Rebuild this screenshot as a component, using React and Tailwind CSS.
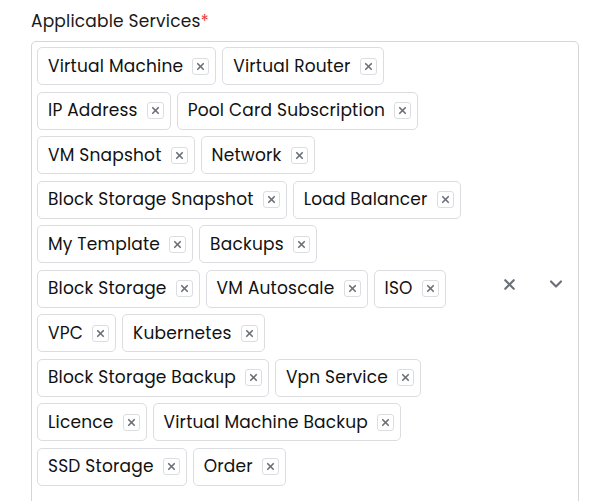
import { X, ChevronDown } from "lucide-react";

const services = [
  "Virtual Machine",
  "Virtual Router",
  "IP Address",
  "Pool Card Subscription",
  "VM Snapshot",
  "Network",
  "Block Storage Snapshot",
  "Load Balancer",
  "My Template",
  "Backups",
  "Block Storage",
  "VM Autoscale",
  "ISO",
  "VPC",
  "Kubernetes",
  "Block Storage Backup",
  "Vpn Service",
  "Licence",
  "Virtual Machine Backup",
  "SSD Storage",
  "Order",
];

function Chip({ label }) {
  return (
    <div className="flex h-[38px] items-center gap-[9px] rounded-[5px] border border-[#dcdde0] bg-white pl-[10px] pr-[6px]">
      <span className="text-[17px] leading-none tracking-[0.2px] text-[#111111]">{label}</span>
      <span className="flex h-[17px] w-[17px] items-center justify-center rounded-[3px] border border-[#dcdde0] text-[#6b6f78]">
        <X size={11} strokeWidth={3.6} />
      </span>
    </div>
  );
}

export default function App() {
  return (
    <div
      className="min-h-screen bg-white px-[31px] pt-[9px]"
      style={{ fontFamily: "Poppins, Inter, sans-serif" }}
    >
      <label className="block text-[17px] leading-[24px] tracking-[0.2px] text-[#1a1a1a]">
        Applicable Services<span className="text-[#e53935]">*</span>
      </label>
      <div className="mt-[8px] flex w-[548px] items-center rounded-[5px] border border-[#d5d6da] pb-[5px] pl-[5px] pt-[5px]">
        <div className="flex w-[440px] flex-wrap content-start gap-x-[6px] gap-y-[6.5px] pb-[36px]">
          {services.map((s) => (
            <Chip key={s} label={s} />
          ))}
        </div>
        <div className="ml-auto flex items-center gap-[28px] pr-[12px] text-[#6b6f78]">
          <X size={17} strokeWidth={3} />
          <ChevronDown size={20} strokeWidth={2.6} />
        </div>
      </div>
    </div>
  );
}
